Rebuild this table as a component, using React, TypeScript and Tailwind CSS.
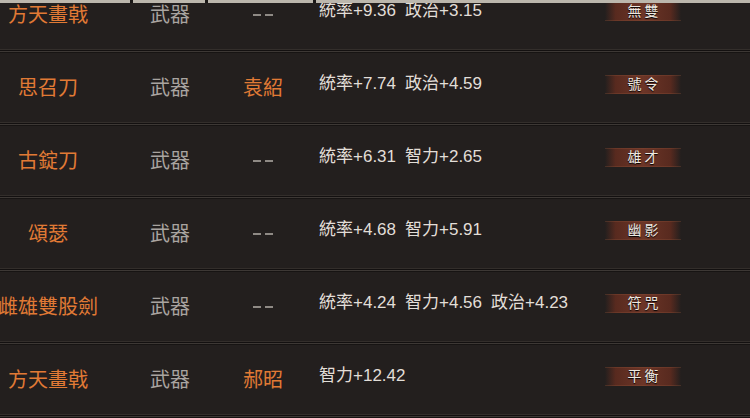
import React from "react";

type Item = {
  name: string;
  kind: string;
  owner: string;
  stats: string[];
  skill: string;
};

const items: Item[] = [
  { name: "方天畫戟", kind: "武器", owner: "--", stats: ["統率+9.36", "政治+3.15"], skill: "無雙" },
  { name: "思召刀", kind: "武器", owner: "袁紹", stats: ["統率+7.74", "政治+4.59"], skill: "號令" },
  { name: "古錠刀", kind: "武器", owner: "--", stats: ["統率+6.31", "智力+2.65"], skill: "雄才" },
  { name: "頌瑟", kind: "武器", owner: "--", stats: ["統率+4.68", "智力+5.91"], skill: "幽影" },
  { name: "雌雄雙股劍", kind: "武器", owner: "--", stats: ["統率+4.24", "智力+4.56", "政治+4.23"], skill: "符咒" },
  { name: "方天畫戟", kind: "武器", owner: "郝昭", stats: ["智力+12.42"], skill: "平衡" },
];

const font = { fontFamily: '"Liberation Sans", "Noto Sans CJK TC", sans-serif' };

const Separator: React.FC = () => (
  <div className="flex flex-col">
    <div className="h-px bg-[#332e2b]" />
    <div className="h-px bg-[#131010]" />
    <div className="h-px bg-[#3d3835]" />
    <div className="h-px bg-[#171413]" />
  </div>
);

const Row: React.FC<{ item: Item }> = ({ item }) => (
  <div>
    <div className="flex h-[69px] items-center">
      <div className="flex w-[96px] justify-center whitespace-nowrap text-[20px] text-[#e17a35]">
        {item.name}
      </div>
      <div className="flex w-[148px] justify-center text-[20px] text-[#a9a4a0]">
        {item.kind}
      </div>
      {item.owner === "--" ? (
        <div className="flex w-[38px] justify-center gap-[4px]">
          <span className="h-[2px] w-[8px] bg-[#8f8a85]" />
          <span className="h-[2px] w-[8px] bg-[#8f8a85]" />
        </div>
      ) : (
        <div className="flex w-[38px] justify-center whitespace-nowrap text-[20px] text-[#e17a35]">
          {item.owner}
        </div>
      )}
      <div className="mb-[7px] flex w-[323px] gap-[9px] whitespace-nowrap pl-[37px] text-[17px] text-[#e2ded8]">
        {item.stats.map((s) => (
          <span key={s}>{s}</span>
        ))}
      </div>
      <div className="mb-[7px] flex h-[19px] w-[76px] items-center justify-center bg-[linear-gradient(90deg,transparent,#582a1f_14%,#6c3527_50%,#582a1f_86%,transparent)] shadow-[inset_0_1px_0_rgba(150,85,60,0.3),inset_0_-1px_0_rgba(150,85,60,0.3)]">
        <span className="pl-[3px] text-[14px] tracking-[3px] text-[#ede9e2] [text-shadow:0_1px_1px_#000]">
          {item.skill}
        </span>
      </div>
    </div>
    <Separator />
  </div>
);

export default function App() {
  return (
    <div className="h-[418px] w-[750px] overflow-hidden bg-[#231f1e]" style={font}>
      {/* header buttons, scrolled mostly out of view */}
      <div className="relative z-10 flex h-[3px] gap-[3px] bg-[#1a1716]">
        <div className="w-[130px] bg-[#bcb7ad]" />
        <div className="w-[72px] bg-[#bcb7ad]" />
        <div className="w-[105px] bg-[#bcb7ad]" />
        <div className="flex-1 bg-[#bcb7ad]" />
      </div>
      <div className="-mt-[23px] flex flex-col">
        {items.map((item, i) => (
          <Row key={i} item={item} />
        ))}
      </div>
    </div>
  );
}
